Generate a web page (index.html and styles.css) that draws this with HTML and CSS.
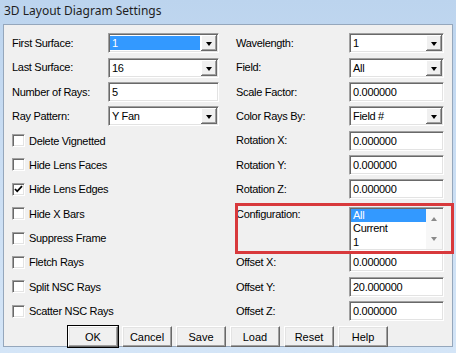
FILE: index.html
```html
<!DOCTYPE html>
<html lang="en">
<head>
  <meta charset="UTF-8">
  <title>3D Layout Diagram Settings</title>
  <link rel="stylesheet" href="styles.css">
</head>
<body>
  <div class="window">
    <div class="titlebar">3D Layout Diagram Settings</div>
    <div class="client">
      <div class="form">
        <div class="col left">
          <span class="lbl">First Surface:</span>
          <div class="field combo selected"><span class="val">1</span><span class="drop"></span></div>
          <span class="lbl">Last Surface:</span>
          <div class="field combo"><span class="val">16</span><span class="drop"></span></div>
          <span class="lbl">Number of Rays:</span>
          <div class="field"><span class="val">5</span></div>
          <span class="lbl">Ray Pattern:</span>
          <div class="field combo"><span class="val">Y Fan</span><span class="drop"></span></div>

          <div class="check"><span class="box"></span>Delete Vignetted</div>
          <div class="check"><span class="box"></span>Hide Lens Faces</div>
          <div class="check"><span class="box checked"><svg width="9" height="9" viewBox="0 0 9 9"><path d="M1 4 L3.2 6.3 L8 1.2" fill="none" stroke="#000" stroke-width="1.8"/></svg></span>Hide Lens Edges</div>
          <div class="check"><span class="box"></span>Hide X Bars</div>
          <div class="check"><span class="box"></span>Suppress Frame</div>
          <div class="check"><span class="box"></span>Fletch Rays</div>
          <div class="check"><span class="box"></span>Split NSC Rays</div>
          <div class="check"><span class="box"></span>Scatter NSC Rays</div>
        </div>

        <div class="col right">
          <span class="lbl">Wavelength:</span>
          <div class="field combo"><span class="val">1</span><span class="drop"></span></div>
          <span class="lbl">Field:</span>
          <div class="field combo"><span class="val">All</span><span class="drop"></span></div>
          <span class="lbl">Scale Factor:</span>
          <div class="field"><span class="val">0.000000</span></div>
          <span class="lbl">Color Rays By:</span>
          <div class="field combo"><span class="val">Field #</span><span class="drop"></span></div>
          <span class="lbl">Rotation X:</span>
          <div class="field"><span class="val">0.000000</span></div>
          <span class="lbl">Rotation Y:</span>
          <div class="field"><span class="val">0.000000</span></div>
          <span class="lbl">Rotation Z:</span>
          <div class="field"><span class="val">0.000000</span></div>

          <span class="lbl tall">Configuration:</span>
          <div class="listbox">
            <div class="items">
              <div class="item on">All</div>
              <div class="item">Current</div>
              <div class="item">1</div>
            </div>
            <div class="scroll"><span class="up"></span><span class="down"></span></div>
          </div>

          <span class="lbl">Offset X:</span>
          <div class="field"><span class="val">0.000000</span></div>
          <span class="lbl">Offset Y:</span>
          <div class="field"><span class="val">20.000000</span></div>
          <span class="lbl">Offset Z:</span>
          <div class="field"><span class="val">0.000000</span></div>
        </div>
      </div>

      <div class="buttons">
        <button class="btn default">OK</button>
        <button class="btn">Cancel</button>
        <button class="btn">Save</button>
        <button class="btn">Load</button>
        <button class="btn">Reset</button>
        <button class="btn">Help</button>
      </div>
    </div>
    <!-- red annotation box -->
    <div class="mark"></div>
  </div>
</body>
</html>
```

FILE: styles.css
```css
body {
  margin: 0;
  font-family: 'Liberation Sans', Arial, sans-serif;
  font-size: 11px;
  letter-spacing: -0.3px;
  color: #000;
}
.window {
  position: relative;
  width: 456px;
  height: 353px;
  background: linear-gradient(180deg, #bcd4ee 0%, #c9ddf3 40%, #d4e5f7 100%);
  overflow: hidden;
}
.titlebar {
  height: 24px;
  line-height: 21px;
  padding-left: 4px;
  font-family: 'Noto Sans', 'Open Sans', sans-serif;
  font-size: 12px;
  letter-spacing: 0;
  color: #1e1e1e;
}
.client {
  margin: 0 3px 0 3px;
  height: 323px;
  box-sizing: border-box;
  border: 1px solid #95a7bc;
  background: #f0f0f0;
  padding: 6px 0 0 8px;
}
.form {
  display: flex;
}
.col {
  display: grid;
  grid-auto-rows: 24.36px;
  align-items: center;
}
.left {
  grid-template-columns: 96px 111px;
}
.right {
  margin-left: 17px;
  grid-template-columns: 113px 95px;
}
.lbl {
  line-height: 24.36px;
  white-space: nowrap;
}
.lbl.tall {
  grid-row: span 2;
  align-self: start;
}

/* sunken edit / combo */
.field {
  height: 20px;
  box-sizing: border-box;
  display: flex;
  background: #fff;
  border: 1px solid;
  border-color: #a0a0a0 #fff #fff #a0a0a0;
  box-shadow: inset 1px 1px #696969, inset -1px -1px #e3e3e3;
  padding: 1px;
}
.val {
  flex: 1;
  padding-left: 2px;
  line-height: 16px;
}
.combo.selected .val {
  background: #3399ff;
  color: #fff;
  margin: 1px 1px 1px 0;
  line-height: 14px;
}
.drop {
  position: relative;
  width: 16px;
  background: #f0f0f0;
  box-shadow: inset -1px -1px #696969, inset 1px 1px #fff, inset -2px -2px #a0a0a0;
}
.drop::after {
  content: '';
  position: absolute;
  left: 5px;
  top: 7px;
  border-left: 3.5px solid transparent;
  border-right: 3.5px solid transparent;
  border-top: 4px solid #000;
}

/* checkboxes */
.check {
  grid-column: 1 / -1;
  display: flex;
  align-items: center;
  gap: 4px;
}
.box {
  width: 13px;
  height: 13px;
  box-sizing: border-box;
  background: #fff;
  border: 1px solid;
  border-color: #a0a0a0 #fff #fff #a0a0a0;
  box-shadow: inset 1px 1px #696969, inset -1px -1px #e3e3e3;
  display: flex;
  align-items: center;
  justify-content: center;
}

/* configuration list */
.listbox {
  grid-row: span 2;
  align-self: start;
  margin-top: 5px;
  height: 44px;
  box-sizing: border-box;
  display: flex;
  background: #fff;
  border: 1px solid;
  border-color: #a0a0a0 #fff #fff #a0a0a0;
  box-shadow: inset 1px 1px #696969, inset -1px -1px #e3e3e3;
  padding: 1px;
}
.items {
  flex: 1;
}
.item {
  height: 13.5px;
  line-height: 13.5px;
  padding-left: 2px;
}
.item.on {
  background: #3399ff;
  color: #fff;
}
.scroll {
  position: relative;
  width: 16px;
  background: #f7f7f7;
}
.scroll .up,
.scroll .down {
  position: absolute;
  left: 5px;
  border-left: 3.5px solid transparent;
  border-right: 3.5px solid transparent;
}
.scroll .up {
  top: 8px;
  border-bottom: 4px solid #8a8a8a;
}
.scroll .down {
  bottom: 8px;
  border-top: 4px solid #8a8a8a;
}

/* buttons */
.buttons {
  display: flex;
  justify-content: center;
  gap: 4px;
  margin: 3px 0 0 -8px;
}
.btn {
  width: 50px;
  height: 21px;
  padding: 0;
  font: inherit;
  color: #000;
  background: #f0f0f0;
  border: 1px solid;
  border-color: #fff #696969 #696969 #fff;
  box-shadow: inset -1px -1px #a0a0a0, inset 1px 1px #e3e3e3;
}
.btn.default {
  outline: 1px solid #000;
}

.mark {
  position: absolute;
  left: 235px;
  top: 203px;
  width: 219px;
  height: 51px;
  box-sizing: border-box;
  border: 3px solid #d8393c;
}
```
